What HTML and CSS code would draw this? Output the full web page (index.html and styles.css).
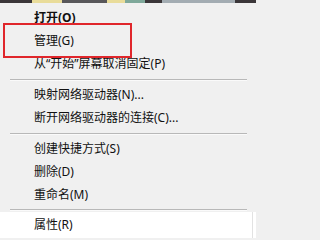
FILE: index.html
```html
<!DOCTYPE html>
<html lang="zh-CN">
<head>
<meta charset="utf-8">
<title>Context menu</title>
<link rel="stylesheet" href="styles.css">
</head>
<body>
<div class="strip">
  <span class="seg dark w32"></span>
  <span class="seg cream w30"></span>
  <span class="seg grey w45"></span>
  <span class="seg cream w18"></span>
  <span class="seg teal w20"></span>
  <span class="seg dark w17"></span>
  <span class="seg light w73"></span>
  <span class="seg dark fill"></span>
</div>
<ul class="menu">
  <li class="item bold">打开(O)</li>
  <li class="item">管理(G)</li>
  <li class="item">从“开始”屏幕取消固定(P)</li>
  <li class="sep"></li>
  <li class="item">映射网络驱动器(N)...</li>
  <li class="item">断开网络驱动器的连接(C)...</li>
  <li class="sep"></li>
  <li class="item">创建快捷方式(S)</li>
  <li class="item">删除(D)</li>
  <li class="item">重命名(M)</li>
  <li class="sep last"></li>
  <li class="item hover">属性(R)</li>
</ul>
<div class="mark"></div>
</body>
</html>
```

FILE: styles.css
```css
html, body {
  margin: 0;
  padding: 0;
}
html {
  background: #f0f0f0;
}
body {
  width: 256px;
  height: 238px;
  overflow: hidden;
  background: #f0f0f0;
  font-family: "Noto Sans", "Noto Sans CJK SC", sans-serif;
  font-size: 12px;
  color: #111;
  position: relative;
}
.strip {
  display: flex;
  height: 3px;
}
.seg { display: block; height: 3px; }
.dark { background: #3b3639; }
.cream { background: #e9dc9a; }
.grey { background: #58575a; }
.teal { background: #7fa89a; }
.light { background: #a3acb2; }
.w32 { width: 32px; }
.w30 { width: 30px; }
.w45 { width: 45px; }
.w18 { width: 18px; }
.w20 { width: 20px; }
.w17 { width: 17px; }
.w73 { width: 73px; }
.fill { flex: 1; }
.menu {
  list-style: none;
  margin: 0;
  padding: 3px 0 0 0;
}
.item {
  height: 23px;
  line-height: 23px;
  padding-left: 34px;
  white-space: nowrap;
}
.bold { font-weight: 700; }
.sep {
  height: 8px;
  display: flex;
  align-items: center;
  padding: 0 9px 0 10px;
}
.sep.last {
  height: 6px;
}
.sep::before {
  content: "";
  display: block;
  flex: 1;
  height: 1px;
  background: #b8b8b8;
  box-shadow: 0 1px 0 #fafafa;
}
.hover {
  background: #ffffff;
  height: 28px;
  line-height: 25px;
  box-shadow: inset -3px 0 0 #ffffff, inset -4px 0 0 #e2e2e2;
}
.mark {
  position: absolute;
  left: 3px;
  top: 23px;
  width: 125px;
  height: 31px;
  border: 2px solid #e0262b;
}
```
